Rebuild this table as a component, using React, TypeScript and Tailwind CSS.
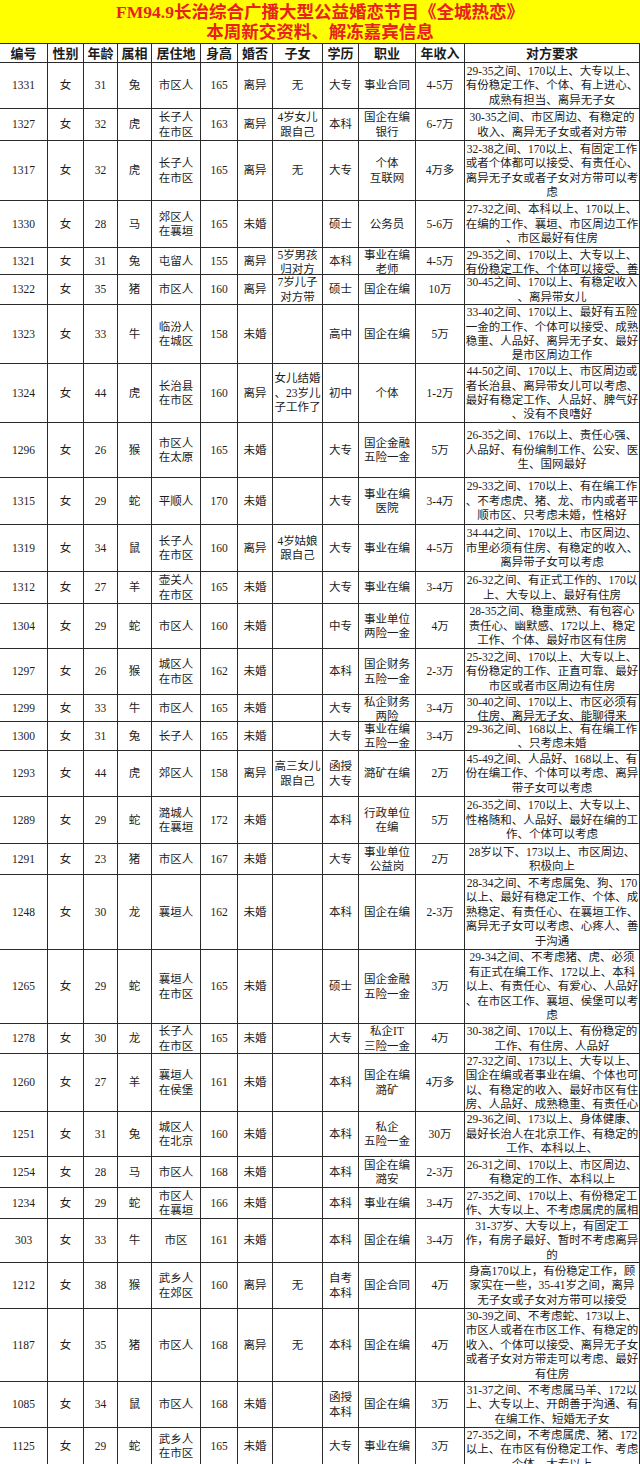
import React from "react";

type Row = {
  id: string;
  age: string;
  zodiac: string;
  home: string[];
  height: string;
  married: string;
  kids: string[];
  edu: string[];
  job: string[];
  income: string;
  req: string[];
  h: string;
};

const colW = [
  "w-[48px]",
  "w-[36px]",
  "w-[34px]",
  "w-[34px]",
  "w-[49px]",
  "w-[37px]",
  "w-[35px]",
  "w-[50px]",
  "w-[36px]",
  "w-[57px]",
  "w-[49px]",
  "w-[175px]",
];

const headers = ["编号", "性别", "年龄", "属相", "居住地", "身高", "婚否", "子女", "学历", "职业", "年收入", "对方要求"];

const rows: Row[] = [
  { id: "1331", age: "31", zodiac: "兔", home: ["市区人"], height: "165", married: "离异", kids: ["无"], edu: ["大专"], job: ["事业合同"], income: "4-5万", req: ["29-35之间、170以上、大专以上、", "有份稳定工作、个体、有上进心、", "成熟有担当、离异无子女"], h: "h-[46px]" },
  { id: "1327", age: "32", zodiac: "虎", home: ["长子人", "在市区"], height: "163", married: "离异", kids: ["4岁女儿", "跟自己"], edu: ["本科"], job: ["国企在编", "银行"], income: "6-7万", req: ["30-35之间、市区周边、有稳定的", "收入、离异无子女或者对方带"], h: "h-[32px]" },
  { id: "1317", age: "32", zodiac: "虎", home: ["长子人", "在市区"], height: "165", married: "离异", kids: ["无"], edu: ["大专"], job: ["个体", "互联网"], income: "4万多", req: ["32-38之间、170以上、有固定工作", "或者个体都可以接受、有责任心、", "离异无子女或者子女对方带可以考", "虑"], h: "h-[60px]" },
  { id: "1330", age: "28", zodiac: "马", home: ["郊区人", "在襄垣"], height: "165", married: "未婚", kids: [], edu: ["硕士"], job: ["公务员"], income: "5-6万", req: ["27-32之间、本科以上、170以上、", "在编的工作、襄垣、市区周边工作", "、市区最好有住房"], h: "h-[47px]" },
  { id: "1321", age: "31", zodiac: "兔", home: ["屯留人"], height: "155", married: "离异", kids: ["5岁男孩", "归对方"], edu: ["本科"], job: ["事业在编", "老师"], income: "4-5万", req: ["29-35之间、170以上、大专以上、", "有份稳定工作、个体可以接受、善"], h: "h-[27px]" },
  { id: "1322", age: "35", zodiac: "猪", home: ["市区人"], height: "160", married: "离异", kids: ["7岁儿子", "对方带"], edu: ["硕士"], job: ["国企在编"], income: "10万", req: ["30-45之间、170以上、有稳定收入", "、离异带女儿"], h: "h-[30px]" },
  { id: "1323", age: "33", zodiac: "牛", home: ["临汾人", "在城区"], height: "158", married: "未婚", kids: [], edu: ["高中"], job: ["国企在编"], income: "5万", req: ["33-40之间、170以上、最好有五险", "一金的工作、个体可以接受、成熟", "稳重、人品好、离异无子女、最好", "是市区周边工作"], h: "h-[59px]" },
  { id: "1324", age: "44", zodiac: "虎", home: ["长治县", "在市区"], height: "160", married: "离异", kids: ["女儿结婚", "、23岁儿", "子工作了"], edu: ["初中"], job: ["个体"], income: "1-2万", req: ["44-50之间、170以上、市区周边或", "者长治县、离异带女儿可以考虑、", "最好有稳定工作、人品好、脾气好", "、没有不良嗜好"], h: "h-[59px]" },
  { id: "1296", age: "26", zodiac: "猴", home: ["市区人", "在太原"], height: "165", married: "未婚", kids: [], edu: ["大专"], job: ["国企金融", "五险一金"], income: "5万", req: ["26-35之间、176以上、责任心强、", "人品好、有份编制工作、公安、医", "生、国网最好"], h: "h-[55px]" },
  { id: "1315", age: "29", zodiac: "蛇", home: ["平顺人"], height: "170", married: "未婚", kids: [], edu: ["大专"], job: ["事业在编", "医院"], income: "3-4万", req: ["29-33之间、170以上、有在编工作", "、不考虑虎、猪、龙、市内或者平", "顺市区、只考虑未婚，性格好"], h: "h-[47px]" },
  { id: "1319", age: "34", zodiac: "鼠", home: ["长子人", "在市区"], height: "160", married: "离异", kids: ["4岁姑娘", "跟自己"], edu: ["大专"], job: ["事业在编"], income: "4-5万", req: ["34-44之间、170以上、市区周边、", "市里必须有住房、有稳定的收入、", "离异带子女可以考虑"], h: "h-[47px]" },
  { id: "1312", age: "27", zodiac: "羊", home: ["壶关人", "在市区"], height: "165", married: "未婚", kids: [], edu: ["大专"], job: ["事业在编"], income: "3-4万", req: ["26-32之间、有正式工作的、170以", "上、大专以上、最好有住房"], h: "h-[32px]" },
  { id: "1304", age: "29", zodiac: "蛇", home: ["市区人"], height: "160", married: "未婚", kids: [], edu: ["中专"], job: ["事业单位", "两险一金"], income: "4万", req: ["28-35之间、稳重成熟、有包容心", "责任心、幽默感、172以上、稳定", "工作、个体、最好市区有住房"], h: "h-[45px]" },
  { id: "1297", age: "26", zodiac: "猴", home: ["城区人", "在市区"], height: "162", married: "未婚", kids: [], edu: ["本科"], job: ["国企财务", "五险一金"], income: "2-3万", req: ["25-32之间、170以上、大专以上、", "有份稳定的工作、正直可靠、最好", "市区或者市区周边有住房"], h: "h-[46px]" },
  { id: "1299", age: "33", zodiac: "牛", home: ["市区人"], height: "165", married: "未婚", kids: [], edu: ["大专"], job: ["私企财务", "两险"], income: "3-4万", req: ["30-40之间、170以上、市区必须有", "住房、离异无子女、能聊得来"], h: "h-[27px]" },
  { id: "1300", age: "31", zodiac: "兔", home: ["长子人"], height: "165", married: "未婚", kids: [], edu: ["大专"], job: ["事业在编", "五险一金"], income: "3-4万", req: ["29-36之间、168以上、有在编工作", "、只考虑未婚"], h: "h-[29px]" },
  { id: "1293", age: "44", zodiac: "虎", home: ["郊区人"], height: "158", married: "离异", kids: ["高三女儿", "跟自己"], edu: ["函授", "大专"], job: ["潞矿在编"], income: "2万", req: ["45-49之间、人品好、168以上、有", "份在编工作、个体可以考虑、离异", "带子女可以考虑"], h: "h-[46px]" },
  { id: "1289", age: "29", zodiac: "蛇", home: ["潞城人", "在襄垣"], height: "172", married: "未婚", kids: [], edu: ["本科"], job: ["行政单位", "在编"], income: "5万", req: ["26-35之间、170以上、大专以上、", "性格随和、人品好、最好在编的工", "作、个体可以考虑"], h: "h-[47px]" },
  { id: "1291", age: "23", zodiac: "猪", home: ["市区人"], height: "167", married: "未婚", kids: [], edu: ["大专"], job: ["事业单位", "公益岗"], income: "2万", req: ["28岁以下、173以上、市区周边、", "积极向上"], h: "h-[31px]" },
  { id: "1248", age: "30", zodiac: "龙", home: ["襄垣人"], height: "162", married: "未婚", kids: [], edu: ["本科"], job: ["国企在编"], income: "2-3万", req: ["28-34之间、不考虑属兔、狗、170", "以上、最好有稳定工作、个体、成", "熟稳定、有责任心、在襄垣工作、", "离异无子女可以考虑、心疼人、善", "于沟通"], h: "h-[75px]" },
  { id: "1265", age: "29", zodiac: "蛇", home: ["襄垣人", "在市区"], height: "165", married: "未婚", kids: [], edu: ["硕士"], job: ["国企金融", "五险一金"], income: "3万", req: ["29-34之间、不考虑猪、虎、必须", "有正式在编工作、172以上、本科", "以上、有责任心、有爱心、人品好", "、在市区工作、襄垣、侯堡可以考", "虑"], h: "h-[74px]" },
  { id: "1278", age: "30", zodiac: "龙", home: ["长子人", "在市区"], height: "165", married: "未婚", kids: [], edu: ["大专"], job: ["私企IT", "三险一金"], income: "4万", req: ["30-38之间、170以上、有份稳定的", "工作、有住房、人品好"], h: "h-[30px]" },
  { id: "1260", age: "27", zodiac: "羊", home: ["襄垣人", "在侯堡"], height: "161", married: "未婚", kids: [], edu: ["本科"], job: ["国企在编", "潞矿"], income: "4万多", req: ["27-32之间、173以上、大专以上、", "国企在编或者事业在编、个体也可", "以、有稳定的收入、最好市区有住", "房、人品好、成熟稳重、有责任心"], h: "h-[58px]" },
  { id: "1251", age: "31", zodiac: "兔", home: ["城区人", "在北京"], height: "160", married: "未婚", kids: [], edu: ["本科"], job: ["私企", "五险一金"], income: "30万", req: ["29-36之间、173以上、身体健康、", "最好长治人在北京工作、有稳定的", "工作、本科以上、"], h: "h-[45px]" },
  { id: "1254", age: "28", zodiac: "马", home: ["市区人"], height: "168", married: "未婚", kids: [], edu: ["本科"], job: ["国企在编", "潞安"], income: "2-3万", req: ["26-31之间、170以上、市区周边、", "有稳定的工作、本科以上"], h: "h-[31px]" },
  { id: "1234", age: "29", zodiac: "蛇", home: ["市区人", "在襄垣"], height: "166", married: "未婚", kids: [], edu: ["本科"], job: ["事业在编"], income: "3-4万", req: ["27-35之间、170以上、有份稳定工", "作、大专以上、不考虑属虎的属相"], h: "h-[31px]" },
  { id: "303", age: "33", zodiac: "牛", home: ["市区"], height: "161", married: "未婚", kids: [], edu: ["本科"], job: ["国企在编"], income: "3-4万", req: ["31-37岁、大专以上，有固定工", "作，有房子最好、暂时不考虑离异", "的"], h: "h-[44px]" },
  { id: "1212", age: "38", zodiac: "猴", home: ["武乡人", "在郊区"], height: "160", married: "离异", kids: ["无"], edu: ["自考", "本科"], job: ["国企合同"], income: "4万", req: ["身高170以上，有份稳定工作，顾", "家实在一些，35-41岁之间，离异", "无子女或子女对方带可以接受"], h: "h-[46px]" },
  { id: "1187", age: "35", zodiac: "猪", home: ["市区人"], height: "168", married: "离异", kids: ["无"], edu: ["本科"], job: ["国企在编"], income: "4万", req: ["30-39之间、不考虑蛇、173以上、", "市区人或者在市区工作、有稳定的", "收入、个体可以接受、离异无子女", "或者子女对方带走可以考虑、最好", "有住房"], h: "h-[73px]" },
  { id: "1085", age: "34", zodiac: "鼠", home: ["市区人"], height: "168", married: "未婚", kids: [], edu: ["函授", "本科"], job: ["国企在编"], income: "3万", req: ["31-37之间、不考虑属马羊、172以", "上、大专以上、开朗善于沟通、有", "在编工作、短婚无子女"], h: "h-[46px]" },
  { id: "1125", age: "29", zodiac: "蛇", home: ["武乡人", "在市区"], height: "165", married: "未婚", kids: [], edu: ["大专"], job: ["事业在编"], income: "3万", req: ["27-35之间，不考虑属虎、猪、172", "以上、在市区有份稳定工作、考虑", "个体、大专以上"], h: "h-[37px]" },
];

// overflowing cells keep their first line in view and clip at the bottom, like the sheet
function Cell({ w, lines }: { w: string; lines: string[] }) {
  return (
    <div className={`${w} shrink-0 flex flex-col items-center [justify-content:safe_center] overflow-hidden border-r border-[#2a2a2a] text-center`}>
      {lines.map((l, i) => (
        <div key={i} className="whitespace-nowrap">
          {l}
        </div>
      ))}
    </div>
  );
}

export default function App() {
  return (
    <div className="w-[640px] bg-white font-['Liberation_Serif','Noto_Sans_CJK_SC',serif] text-[#1c1c1c]">
      <div className="flex h-[44px] flex-col items-center justify-center border-b border-[#2a2a2a] bg-[#ffff00] text-[17.5px] font-bold leading-[20px] text-[#e8211f]">
        <div>FM94.9长治综合广播大型公益婚恋节目《全城热恋》</div>
        <div>本周新交资料、解冻嘉宾信息</div>
      </div>

      <div className="flex h-[19px] border-b border-[#2a2a2a] text-[13px] font-bold leading-[17px]">
        {headers.map((t, i) => (
          <Cell key={t} w={colW[i]} lines={[t]} />
        ))}
      </div>

      <div className="text-[11.5px] leading-[14.4px]">
        {rows.map((r) => (
          <div key={r.id} className={`${r.h} flex border-b border-[#2a2a2a]`}>
            <Cell w={colW[0]} lines={[r.id]} />
            <Cell w={colW[1]} lines={["女"]} />
            <Cell w={colW[2]} lines={[r.age]} />
            <Cell w={colW[3]} lines={[r.zodiac]} />
            <Cell w={colW[4]} lines={r.home} />
            <Cell w={colW[5]} lines={[r.height]} />
            <Cell w={colW[6]} lines={[r.married]} />
            <Cell w={colW[7]} lines={r.kids} />
            <Cell w={colW[8]} lines={r.edu} />
            <Cell w={colW[9]} lines={r.job} />
            <Cell w={colW[10]} lines={[r.income]} />
            <Cell w={colW[11]} lines={r.req} />
          </div>
        ))}
      </div>
    </div>
  );
}
